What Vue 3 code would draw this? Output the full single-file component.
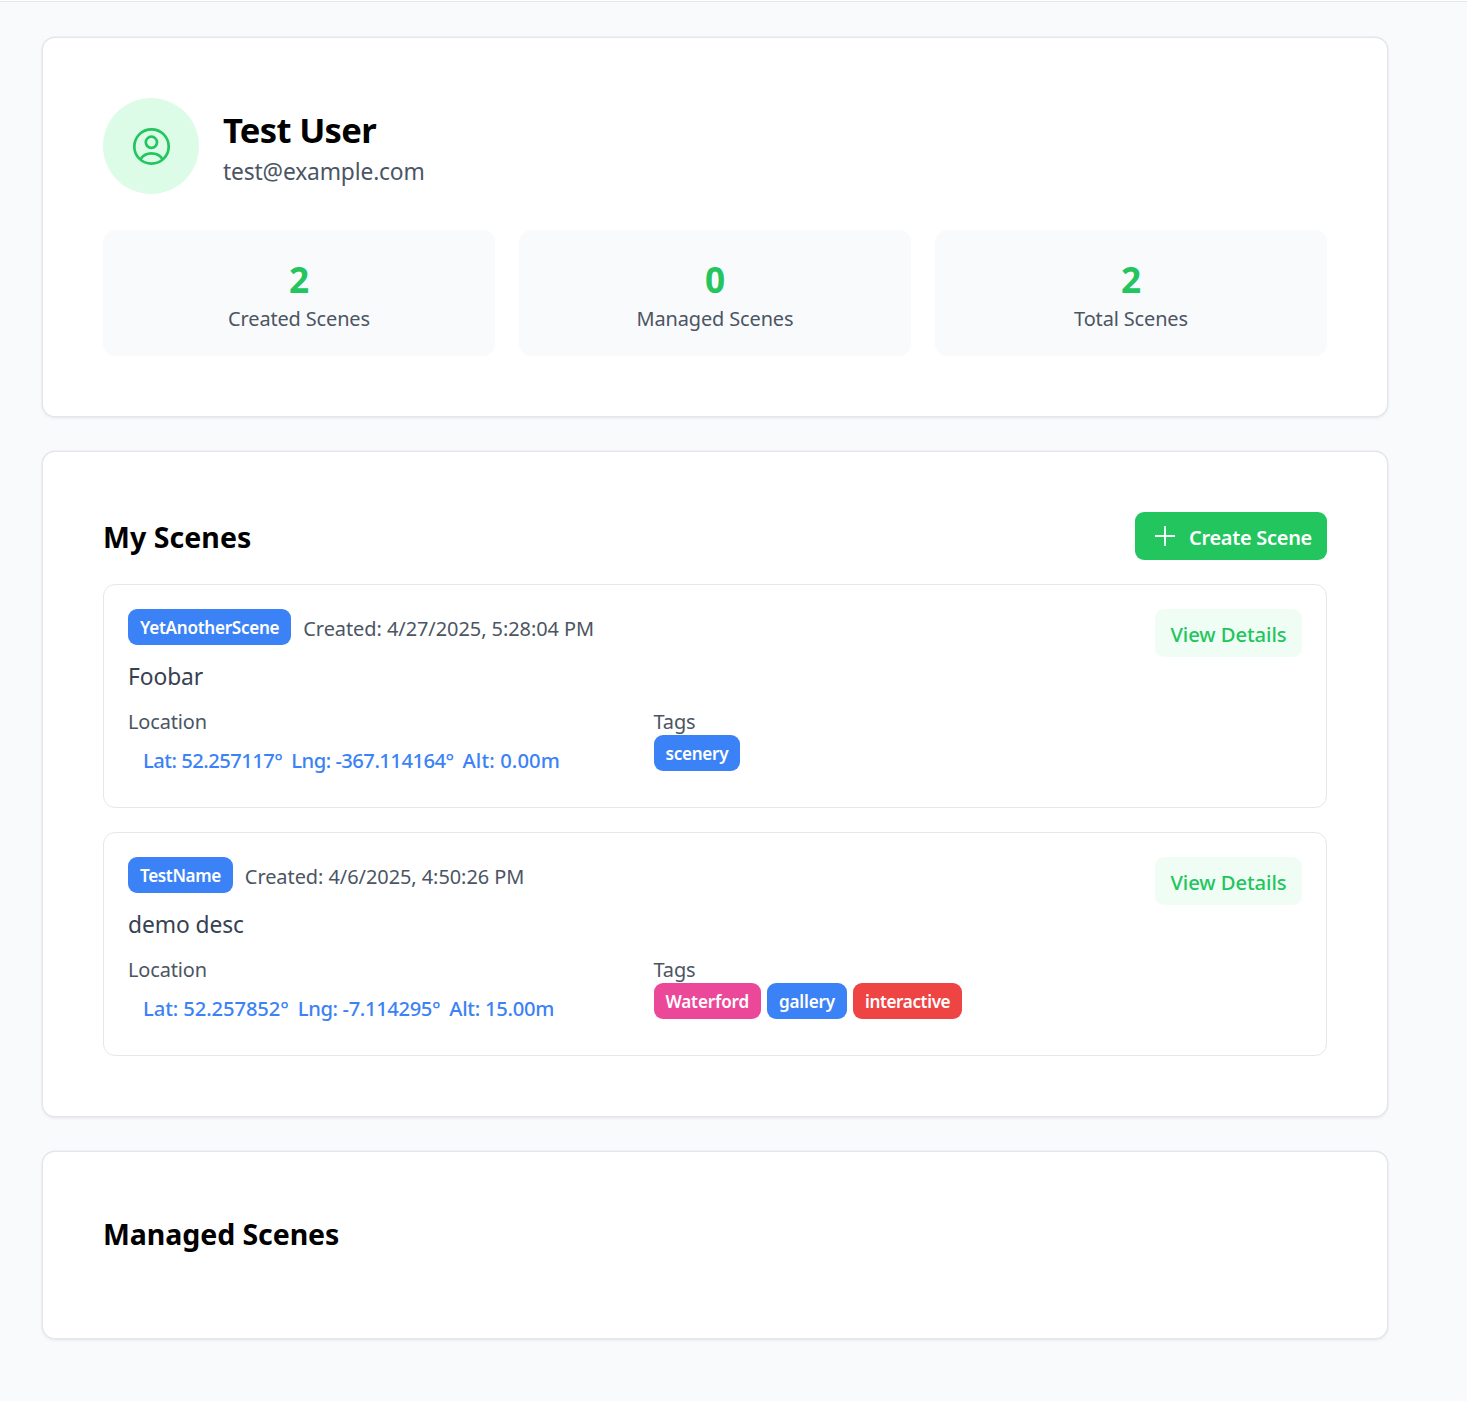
<script setup>
const user = { name: 'Test User', email: 'test@example.com' }

const stats = [
  { value: 2, label: 'Created Scenes' },
  { value: 0, label: 'Managed Scenes' },
  { value: 2, label: 'Total Scenes' },
]

const scenes = [
  {
    name: 'YetAnotherScene',
    nameFit: 'fit-snug',
    created: '4/27/2025, 5:28:04 PM',
    description: 'Foobar',
    coords: [
      { text: 'Lat: 52.257117°', fit: 'fit-narrow' },
      { text: 'Lng: -367.114164°', fit: 'fit-narrow' },
      { text: 'Alt: 0.00m', fit: 'fit-wide' },
    ],
    tags: [{ label: 'scenery', color: 'blue', fit: 'fit-snug' }],
  },
  {
    name: 'TestName',
    nameFit: 'fit-tight',
    created: '4/6/2025, 4:50:26 PM',
    description: 'demo desc',
    coords: [
      { text: 'Lat: 52.257852°', fit: 'fit-normal' },
      { text: 'Lng: -7.114295°', fit: 'fit-tight' },
      { text: 'Alt: 15.00m', fit: 'fit-snug' },
    ],
    tags: [
      { label: 'Waterford', color: 'pink', fit: 'fit-loose' },
      { label: 'gallery', color: 'blue', fit: 'fit-loose' },
      { label: 'interactive', color: 'red', fit: 'fit-tight' },
    ],
  },
]
</script>

<template>
  <div class="page">
    <div class="topline"></div>
    <main class="content">
      <section class="card">
        <header class="profile">
          <div class="avatar">
            <svg width="48" height="48" viewBox="0 0 48 48" fill="none" stroke="currentColor" stroke-width="2.7">
              <circle cx="24.5" cy="24.5" r="17.2" />
              <circle cx="24.4" cy="20.3" r="5.6" />
              <path d="M13.6 36.9C16.1 33.2 20.1 31.4 24.5 31.4S32.9 33.2 35.4 36.9" />
            </svg>
          </div>
          <div>
            <h1 class="name">{{ user.name }}</h1>
            <p class="email">{{ user.email }}</p>
          </div>
        </header>
        <div class="stats">
          <div v-for="stat in stats" :key="stat.label" class="stat">
            <div class="stat-value">{{ stat.value }}</div>
            <div class="label">{{ stat.label }}</div>
          </div>
        </div>
      </section>

      <section class="card">
        <header class="section-head">
          <h2 class="heading">My Scenes</h2>
          <button class="button create">
            <svg width="30" height="30" viewBox="0 0 30 30" fill="none" stroke="currentColor" stroke-width="1.8">
              <path d="M15 5v20M5 15h20" />
            </svg>
            <span>Create Scene</span>
          </button>
        </header>
        <div class="scene-list">
          <article v-for="scene in scenes" :key="scene.name" class="scene">
            <div class="scene-body">
              <div class="scene-title">
                <span class="badge blue" :class="scene.nameFit">{{ scene.name }}</span>
                <span class="label created">Created: {{ scene.created }}</span>
              </div>
              <p class="description">{{ scene.description }}</p>
              <div class="details">
                <div>
                  <div class="label">Location</div>
                  <div class="coords">
                    <span v-for="c in scene.coords" :key="c.text" :class="c.fit">{{ c.text }}</span>
                  </div>
                </div>
                <div>
                  <div class="label">Tags</div>
                  <div class="tags">
                    <span v-for="tag in scene.tags" :key="tag.label" class="badge" :class="[tag.color, tag.fit]">{{ tag.label }}</span>
                  </div>
                </div>
              </div>
            </div>
            <button class="button view"><span>View Details</span></button>
          </article>
        </div>
      </section>

      <section class="card managed">
        <h2 class="heading">Managed Scenes</h2>
      </section>
    </main>
  </div>
</template>

<style>
body {
  background: #f9fafc;
}
</style>

<style scoped>
* {
  box-sizing: border-box;
}
.page {
  min-height: 1401px;
  background: #f9fafc;
  color: #000;
  font-family: 'Noto Sans', 'Open Sans', sans-serif;
}
.topline {
  height: 2px;
  background: #fff;
  border-bottom: 1px solid #e5e7eb;
}
.content {
  display: flex;
  flex-direction: column;
  gap: 36px;
  width: 1344px;
  margin-left: 43px;
  padding-top: 36px;
}
.card {
  padding: 60px;
  border-radius: 12px;
  background: #fff;
  box-shadow: 0 0 0 1.5px #e5e6eb, 0 1.5px 3px 1px rgba(0, 0, 0, 0.05);
}
h1,
h2,
p {
  margin: 0;
}
.profile {
  display: flex;
  align-items: center;
  gap: 24px;
  margin-bottom: 36px;
}
.avatar {
  display: flex;
  align-items: center;
  justify-content: center;
  width: 96px;
  height: 96px;
  border-radius: 50%;
  background: #dcfce7;
  color: #22c55e;
}
.avatar svg {
  display: block;
}
.name {
  padding-top: 3px;
  font-size: 34.6px;
  font-weight: 700;
  line-height: 45px;
  letter-spacing: -0.68px;
}
.email {
  padding-top: 4px;
  color: #4b5563;
  font-size: 22.8px;
  line-height: 32px;
  letter-spacing: -0.16px;
}
.stats {
  display: grid;
  grid-template-columns: repeat(3, 1fr);
  gap: 24px;
}
.stat {
  padding: 24px;
  border-radius: 12px;
  background: #f9fafc;
  text-align: center;
}
.stat-value {
  padding-top: 3px;
  color: #22c55e;
  font-size: 35.2px;
  font-weight: 700;
  line-height: 45px;
}
.label {
  padding-top: 4px;
  color: #4b5563;
  font-size: 19.95px;
  line-height: 26px;
  letter-spacing: -0.13px;
  white-space: nowrap;
}
.created {
  letter-spacing: -0.05px;
}
.section-head {
  display: flex;
  align-items: center;
  justify-content: space-between;
  margin-bottom: 24px;
}
.heading {
  padding-top: 3px;
  font-size: 28.5px;
  font-weight: 700;
  line-height: 39px;
  letter-spacing: 0.06px;
}
.managed .heading {
  margin-bottom: 24px;
  letter-spacing: -0.07px;
}
.button {
  display: flex;
  align-items: center;
  justify-content: center;
  height: 48px;
  padding: 0 15px;
  border: 0;
  border-radius: 9px;
  font: 500 20.2px/26px 'Noto Sans', 'Open Sans', sans-serif;
  white-space: nowrap;
}
.button span {
  padding-top: 4px;
}
.create {
  gap: 9px;
  width: 192px;
  background: #22c55e;
  color: #fff;
  font-size: 19.95px;
  font-weight: 600;
  letter-spacing: -0.28px;
}
.view {
  width: 147px;
  background: #f0fdf4;
  color: #22c55e;
  letter-spacing: -0.08px;
}
.view span {
  padding-top: 2px;
}
.scene-list {
  display: flex;
  flex-direction: column;
  gap: 24px;
}
.scene {
  display: flex;
  align-items: flex-start;
  padding: 24px;
  border: 1px solid #e5e7eb;
  border-radius: 12px;
}
.scene-body {
  flex: 1;
}
.scene-title {
  display: flex;
  align-items: center;
  gap: 12px;
  margin-bottom: 12px;
}
.badge {
  height: 36px;
  padding: 1px 12px 0;
  border-radius: 9px;
  color: #fff;
  font-size: 17.1px;
  font-weight: 600;
  line-height: 35px;
}
.blue {
  background: #3b82f6;
}
.pink {
  background: #ec4899;
}
.red {
  background: #ef4444;
}
.description {
  margin-bottom: 12px;
  padding-top: 4px;
  color: #374151;
  font-size: 22.8px;
  line-height: 32px;
  letter-spacing: -0.08px;
}
.details {
  display: grid;
  grid-template-columns: 1fr 1fr;
  gap: 24px;
}
.coords {
  display: flex;
  gap: 9px;
  height: 48px;
  padding: 1px 15px 0;
  color: #3b82f6;
  font-size: 20.2px;
  font-weight: 500;
  line-height: 48px;
  white-space: nowrap;
}
.tags {
  display: flex;
  gap: 6px;
}
.fit-narrow {
  letter-spacing: -0.53px;
}
.fit-tight {
  letter-spacing: -0.38px;
}
.fit-snug {
  letter-spacing: -0.28px;
}
.fit-loose {
  letter-spacing: -0.17px;
}
.fit-normal {
  letter-spacing: -0.1px;
}
.fit-wide {
  letter-spacing: 0.1px;
}
</style>
